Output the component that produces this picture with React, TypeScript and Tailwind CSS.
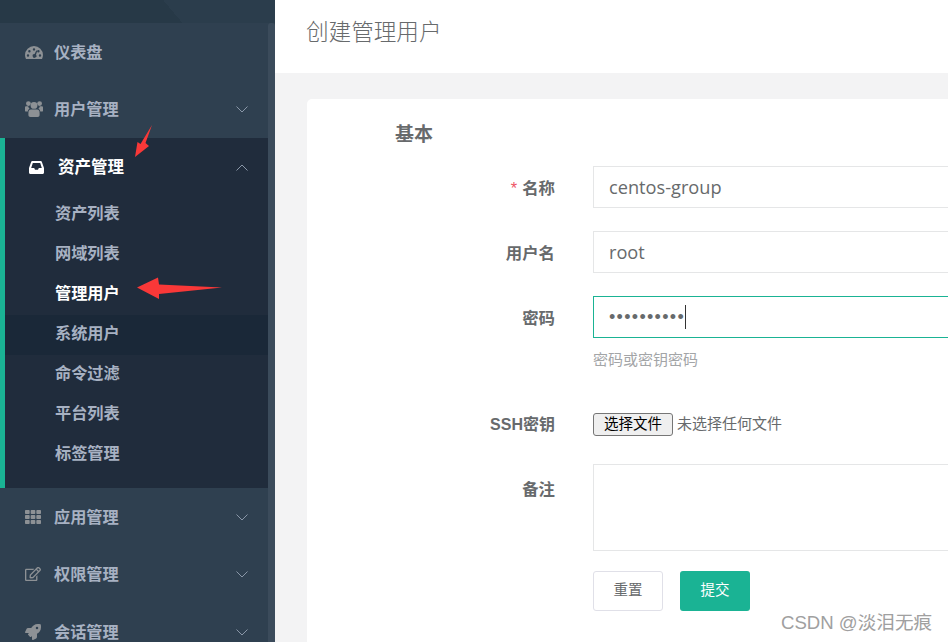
import { FaTh, FaRegEdit, FaRocket } from "react-icons/fa";
import type { ComponentType, ReactNode } from "react";

type IconProps = { className?: string };

function DashboardIcon({ className }: IconProps) {
  return (
    <svg width="18" height="13" viewBox="0 0 18 13" className={className}>
      <path
        fillRule="evenodd"
        fill="currentColor"
        d="M9 0A9 9 0 0 1 18 9C18 10.5 17.6 11.7 17 13H1C0.4 11.7 0 10.5 0 9A9 9 0 0 1 9 0ZM9 2.2A1.2 1.2 0 1 0 9 4.6A1.2 1.2 0 1 0 9 2.2ZM4.4 4A1.2 1.2 0 1 0 4.4 6.4A1.2 1.2 0 1 0 4.4 4ZM13.4 4A1.2 1.2 0 1 0 13.4 6.4A1.2 1.2 0 1 0 13.4 4ZM3 8.3A1.2 1.2 0 1 0 3 10.7A1.2 1.2 0 1 0 3 8.3ZM15 8.3A1.2 1.2 0 1 0 15 10.7A1.2 1.2 0 1 0 15 8.3ZM11.3 4.4L9.6 8A1.9 1.9 0 1 0 11 8.7L12.3 4.8Z"
      />
    </svg>
  );
}

function UsersIcon({ className }: IconProps) {
  return (
    <svg width="18" height="16" viewBox="0 0 18 16" className={className}>
      <g fill="currentColor">
        <circle cx="3.4" cy="2.6" r="2.4" />
        <circle cx="14.6" cy="2.6" r="2.4" />
        <path d="M0 6.2C0 5.4 0.6 5.2 1.4 5.2H3.2C3.4 6.4 3.9 7.2 4.6 7.8C3.5 8.3 2.9 9.2 2.8 10.4H0.8C0.2 10.4 0 10 0 9.4Z" />
        <path d="M18 6.2C18 5.4 17.4 5.2 16.6 5.2H14.8C14.6 6.4 14.1 7.2 13.4 7.8C14.5 8.3 15.1 9.2 15.2 10.4H17.2C17.8 10.4 18 10 18 9.4Z" />
        <circle cx="9" cy="4.4" r="3.4" />
        <path d="M6 8.4H12C14 8.4 14.6 9.8 14.6 12V14C14.6 15.2 13.8 16 12.6 16H5.4C4.2 16 3.4 15.2 3.4 14V12C3.4 9.8 4 8.4 6 8.4Z" />
      </g>
    </svg>
  );
}

function InboxIcon({ className }: IconProps) {
  return (
    <svg width="15" height="13" viewBox="0 0 15 13" className={className}>
      <path
        fillRule="evenodd"
        fill="currentColor"
        d="M3.2 0H11.8C12.3 0 12.6 0.3 12.8 0.7L15 7V11.5C15 12.4 14.4 13 13.5 13H1.5C0.6 13 0 12.4 0 11.5V7L2.2 0.7C2.4 0.3 2.7 0 3.2 0ZM3.8 2L2.2 7H5.2L6 8.8H9L9.8 7H12.8L11.2 2Z"
      />
    </svg>
  );
}

function Chevron({ up = false }: { up?: boolean }) {
  return (
    <svg width="12" height="7" viewBox="0 0 12 7" fill="none" className="ml-auto mr-[20px] text-[#8a97a8]">
      <path d={up ? "M0.5 6.5L6 1L11.5 6.5" : "M0.5 0.5L6 6L11.5 0.5"} stroke="currentColor" strokeWidth="1" />
    </svg>
  );
}

function NavItem({ icon: Icon, label, className = "h-[57px] pt-[1px]" }: { icon: ComponentType<IconProps>; label: string; className?: string }) {
  return (
    <div className={`flex shrink-0 items-center pl-[25px] ${className}`}>
      <span className="flex w-[29px] items-center">
        <Icon className="text-[#8d9195]" />
      </span>
      <span className="text-[16.2px] font-semibold text-[#a7b1c2]">{label}</span>
      {label !== "仪表盘" && <Chevron />}
    </div>
  );
}

function SubItem({ label, active = false, hover = false }: { label: string; active?: boolean; hover?: boolean }) {
  return (
    <div
      className={`flex h-10 items-center pb-[4px] pl-[50px] text-[16.2px] font-semibold ${active ? "text-white" : "text-[#a7b1c2]"} ${hover ? "bg-[#1a2838]" : ""}`}
    >
      {label}
    </div>
  );
}

function Sidebar() {
  return (
    <aside className="flex h-[642px] w-[275px] shrink-0 flex-col bg-[#2f4050]">
      <div className="h-[23px] shrink-0 bg-[linear-gradient(50deg,#273947_62%,#2b3d4c_62%)]" />
      <div className="flex min-h-0 flex-1">
        <div className="flex w-[268px] flex-col overflow-hidden">
          <NavItem icon={DashboardIcon} label="仪表盘" className="h-[58px] pt-[1px]" />
          <NavItem icon={UsersIcon} label="用户管理" className="h-[57px] pb-[1px]" />
          <div className="h-[350px] shrink-0 border-l-[5px] border-[#1ab394] bg-[#202c3c]">
            <div className="flex h-[57px] items-center pl-[24px] pt-[2px]">
              <span className="flex w-[29px] items-center">
                <InboxIcon className="text-white" />
              </span>
              <span className="text-[16.5px] font-bold text-white">资产管理</span>
              <Chevron up />
            </div>
            <SubItem label="资产列表" />
            <SubItem label="网域列表" />
            <SubItem label="管理用户" active />
            <SubItem label="系统用户" hover />
            <SubItem label="命令过滤" />
            <SubItem label="平台列表" />
            <SubItem label="标签管理" />
          </div>
          <NavItem icon={() => <FaTh size={16} className="text-[#8d9195]" />} label="应用管理" />
          <NavItem icon={() => <FaRegEdit size={16} className="text-[#8d9195]" />} label="权限管理" />
          <NavItem icon={() => <FaRocket size={16} className="text-[#8d9195]" />} label="会话管理" className="h-[58px] pt-[2px]" />
        </div>
        <div className="w-[7px] rounded-t-[3px] bg-[#3b4b5b]" />
      </div>
    </aside>
  );
}

function Field({ label, required = false, children, className = "", labelClass = "pt-[3px] text-[16.4px]" }: { label: string; required?: boolean; children: ReactNode; className?: string; labelClass?: string }) {
  return (
    <div className={`flex ${className}`}>
      <label className={`flex h-[42px] w-[248px] shrink-0 items-center justify-end font-bold text-[#676a6c] ${labelClass}`}>
        {required && <span className="mr-[5px] font-normal text-[#ed5565]">*</span>}
        {label}
      </label>
      <div className="ml-[38px] flex-1">{children}</div>
    </div>
  );
}

function TextInput({ value, focused = false, fontClass = "font-['Open_Sans',sans-serif] text-[18.2px]" }: { value: string; focused?: boolean; fontClass?: string }) {
  return (
    <input
      readOnly
      type="text"
      value={value}
      className={`h-[42px] w-full border bg-white px-[15px] text-[#676a6c] outline-none ${focused ? "border-[#1ab394]" : "border-[#e5e6e7]"} ${fontClass}`}
    />
  );
}

export default function App() {
  return (
    <div className="relative flex h-[642px] w-[948px] overflow-hidden bg-[#f3f3f4] font-['Liberation_Sans','Noto_Sans_CJK_SC',sans-serif]">
      <Sidebar />
      <main className="min-w-0 flex-1 overflow-hidden">
        <header className="flex h-[73px] items-center bg-white pb-[8px] pl-[31px] text-[22.6px] font-light text-[#676a6c]">创建管理用户</header>
        <section className="ml-[32px] mt-[26px] h-[600px] w-[800px] rounded-[5px] bg-white pt-[22px]">
          <h3 className="ml-[88px] text-[19px] leading-[28px] font-bold text-[#676a6c]">基本</h3>
          <Field label="名称" required className="mt-[17px]">
            <TextInput value="centos-group" />
          </Field>
          <Field label="用户名" className="mt-[23px]">
            <TextInput value="root" />
          </Field>
          <Field label="密码" className="mt-[23px]">
            <div className="relative">
              <TextInput value="••••••••••" focused fontClass="font-['Liberation_Sans',sans-serif] text-[18px] tracking-[1.3px]" />
              <div className="absolute left-[92px] top-[9px] h-[24px] w-px bg-[#333]" />
            </div>
            <p className="mt-[11px] text-[15px] leading-[22px] text-[#a3a5a7]">密码或密钥密码</p>
          </Field>
          <Field label="SSH密钥" className="mt-[32px]" labelClass="pt-[1px] text-[16px]">
            <div className="flex h-[42px] items-center">
              <button className="h-[23px] w-[80px] rounded-[3px] border border-[#767676] bg-[#efefef] text-[14.5px] leading-[20px] text-black">选择文件</button>
              <span className="ml-[4px] text-[15px] text-[#676a6c]">未选择任何文件</span>
            </div>
          </Field>
          <Field label="备注" className="mt-[19px]" labelClass="pt-[8px] text-[16.4px]">
            <div className="h-[87px] border border-[#e5e6e7] bg-white" />
            <div className="mt-[20px] flex gap-[17px]">
              <button className="h-[40px] w-[70px] rounded-[3px] border border-[#e0e0e8] bg-white text-[14.5px] text-[#676a6c]">重置</button>
              <button className="h-[40px] w-[70px] rounded-[3px] bg-[#1ab394] text-[14.5px] text-white">提交</button>
            </div>
          </Field>
        </section>
      </main>

      <svg className="absolute left-[130px] top-[120px]" width="25" height="40" viewBox="0 0 25 40">
        <path d="M22 5L15.5 23L19 26L5 37L7.5 22L10.5 24Z" fill="#f93838" />
      </svg>
      <svg className="absolute left-[130px] top-[270px]" width="100" height="36" viewBox="0 0 100 36">
        <path d="M7 17.5L28 7.5L29 14.5L92 17.5L29 24L29 29Z" fill="#f93838" />
      </svg>
      <div className="absolute left-[781px] top-[610px] text-[18.6px] leading-[26px] text-[#a0a0a0]">CSDN @淡泪无痕</div>
    </div>
  );
}
